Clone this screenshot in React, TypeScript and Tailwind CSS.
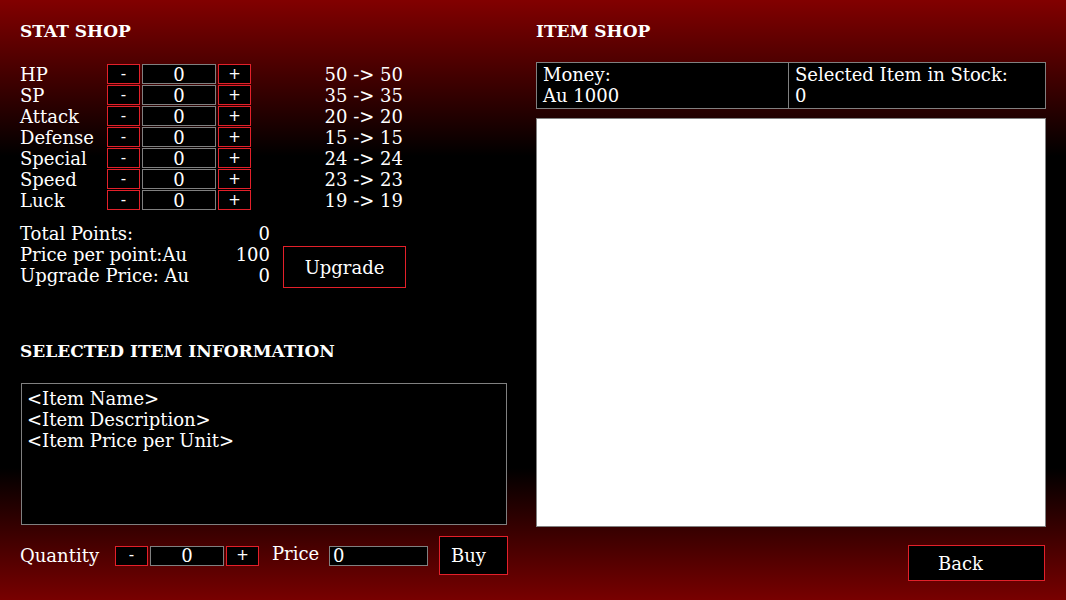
import React from "react"

const stats = [
  { name: "HP", value: 50 },
  { name: "SP", value: 35 },
  { name: "Attack", value: 20 },
  { name: "Defense", value: 15 },
  { name: "Special", value: 24 },
  { name: "Speed", value: 23 },
  { name: "Luck", value: 19 },
]

function Stepper({ value }: { value: number }) {
  return (
    <div className="flex items-center gap-[2px]">
      <div className="w-[33px] h-[20px] border border-[#e3202a] bg-black flex items-center justify-center text-[15px] leading-none font-['DejaVu_Sans',sans-serif]">
        -
      </div>
      <div className="w-[74px] h-[20px] border border-[#808080] bg-black flex items-center justify-center">
        {value}
      </div>
      <div className="w-[33px] h-[20px] border border-[#e3202a] bg-black flex items-center justify-center text-[15px] leading-none font-['DejaVu_Sans',sans-serif]">
        +
      </div>
    </div>
  )
}

export default function App() {
  return (
    <div className="w-[1066px] h-[600px] flex text-white text-[18px] leading-[21px] font-['DejaVu_Serif','Liberation_Serif',serif] bg-[linear-gradient(to_bottom,#820000_0%,#000000_26%,#000000_78%,#780000_100%)]">
      {/* Stat shop + item info */}
      <div className="w-[536px] pl-5 pt-[21px] flex flex-col">
        <h2 className="font-bold text-[17px] leading-[21px]">STAT SHOP</h2>

        <div className="mt-[22px] flex flex-col gap-[1px]">
          {stats.map((s) => (
            <div key={s.name} className="flex items-center h-[20px]">
              <span className="w-[87px]">{s.name}</span>
              <Stepper value={0} />
              <span className="w-[152px] text-right">
                {s.value} -&gt; {s.value}
              </span>
            </div>
          ))}
        </div>

        <div className="mt-[13px] flex items-end">
          <div className="w-[250px] flex flex-col">
            <div className="flex justify-between">
              <span>Total Points:</span>
              <span>0</span>
            </div>
            <div className="flex justify-between">
              <span>Price per point:Au</span>
              <span>100</span>
            </div>
            <div className="flex justify-between">
              <span>Upgrade Price: Au</span>
              <span>0</span>
            </div>
          </div>
          <button className="ml-[13px] mb-[-2px] w-[123px] h-[42px] border border-[#e3202a] bg-black">
            Upgrade
          </button>
        </div>

        <h2 className="mt-[55px] font-bold text-[17px] leading-[21px]">SELECTED ITEM INFORMATION</h2>

        <div className="mt-[21px] w-[486px] h-[142px] ml-[1px] border border-[#808080] bg-black px-[5px] pt-[4px]">
          <div>&lt;Item Name&gt;</div>
          <div>&lt;Item Description&gt;</div>
          <div>&lt;Item Price per Unit&gt;</div>
        </div>

        <div className="mt-[11px] flex items-center">
          <span className="w-[95px]">Quantity</span>
          <Stepper value={0} />
          <span className="ml-[13px] mt-[-4px] w-[57px]">Price</span>
          <div className="w-[99px] h-[20px] border border-[#808080] bg-black pl-[3px] flex items-center">
            0
          </div>
          <button className="ml-[11px] w-[69px] h-[39px] border border-[#e3202a] bg-black text-left pl-[11px]">
            Buy
          </button>
        </div>
      </div>

      {/* Item shop */}
      <div className="w-[510px] pt-[21px] flex flex-col">
        <h2 className="font-bold text-[17px] leading-[21px]">ITEM SHOP</h2>

        <div className="mt-[20px] h-[47px] flex border border-[#808080] bg-black">
          <div className="w-[252px] border-r border-[#808080] px-[6px] pt-[1px]">
            <div>Money:</div>
            <div>Au 1000</div>
          </div>
          <div className="flex-1 px-[6px] pt-[1px]">
            <div>Selected Item in Stock:</div>
            <div>0</div>
          </div>
        </div>

        <div className="mt-[9px] h-[409px] border border-[#808080] bg-white" />

        <div className="mt-[18px] flex justify-end">
          <button className="mr-[1px] w-[137px] h-[36px] border border-[#e3202a] bg-black text-left pl-[29px]">
            Back
          </button>
        </div>
      </div>
    </div>
  )
}
